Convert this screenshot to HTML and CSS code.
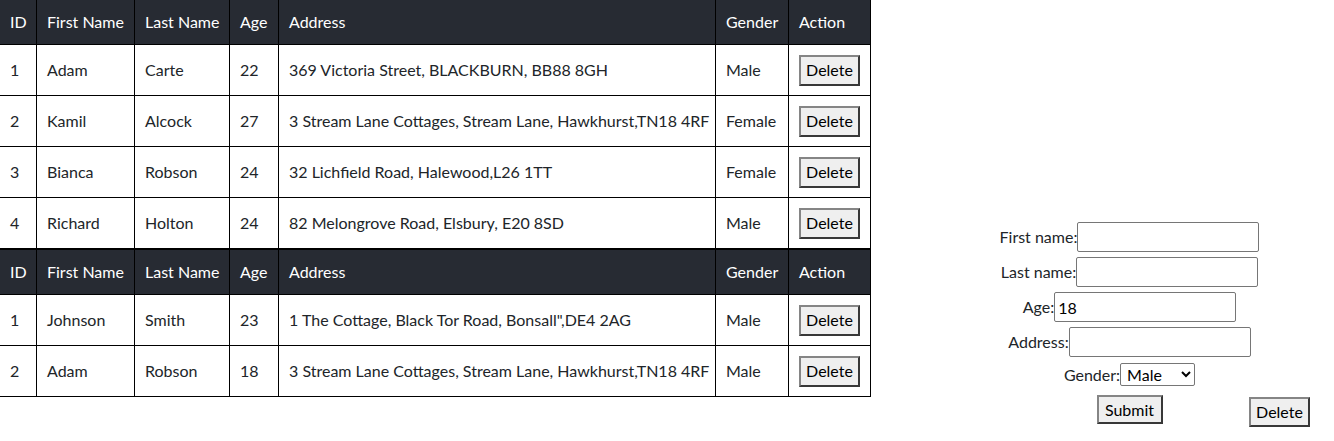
FILE: index.html
```html
<!DOCTYPE html>
<html lang="en">
<head>
<meta charset="utf-8">
<title>People</title>
<link rel="stylesheet" href="styles.css">
</head>
<body>
<div class="page">
  <table class="people">
    <colgroup>
      <col class="c-id"><col class="c-first"><col class="c-last"><col class="c-age"><col class="c-addr"><col class="c-gender"><col class="c-action">
    </colgroup>
    <thead>
      <tr class="head">
        <th>ID</th><th>First Name</th><th>Last Name</th><th>Age</th><th>Address</th><th>Gender</th><th>Action</th>
      </tr>
    </thead>
    <tbody>
      <tr><td>1</td><td>Adam</td><td>Carte</td><td>22</td><td>369 Victoria Street, BLACKBURN, BB88 8GH</td><td>Male</td><td><button type="button" class="btn row-del">Delete</button></td></tr>
      <tr><td>2</td><td>Kamil</td><td>Alcock</td><td>27</td><td>3 Stream Lane Cottages, Stream Lane, Hawkhurst,TN18 4RF</td><td>Female</td><td><button type="button" class="btn row-del">Delete</button></td></tr>
      <tr><td>3</td><td>Bianca</td><td>Robson</td><td>24</td><td>32 Lichfield Road, Halewood,L26 1TT</td><td>Female</td><td><button type="button" class="btn row-del">Delete</button></td></tr>
      <tr><td>4</td><td>Richard</td><td>Holton</td><td>24</td><td>82 Melongrove Road, Elsbury, E20 8SD</td><td>Male</td><td><button type="button" class="btn row-del">Delete</button></td></tr>
    </tbody>
    <tbody class="second">
      <tr class="head">
        <th>ID</th><th>First Name</th><th>Last Name</th><th>Age</th><th>Address</th><th>Gender</th><th>Action</th>
      </tr>
      <tr><td>1</td><td>Johnson</td><td>Smith</td><td>23</td><td>1 The Cottage, Black Tor Road, Bonsall",DE4 2AG</td><td>Male</td><td><button type="button" class="btn row-del">Delete</button></td></tr>
      <tr><td>2</td><td>Adam</td><td>Robson</td><td>18</td><td>3 Stream Lane Cottages, Stream Lane, Hawkhurst,TN18 4RF</td><td>Male</td><td><button type="button" class="btn row-del">Delete</button></td></tr>
    </tbody>
  </table>

  <div class="side">
    <form class="entry">
      <div class="field"><label for="fn">First name:</label><input id="fn" type="text"></div>
      <div class="field"><label for="ln">Last name:</label><input id="ln" type="text"></div>
      <div class="field"><label for="age">Age:</label><input id="age" type="text" value="18"></div>
      <div class="field"><label for="addr">Address:</label><input id="addr" type="text"></div>
      <div class="field gender"><label for="gen">Gender:</label><select id="gen"><option>Male</option><option>Female</option></select></div>
      <div class="actions">
        <span class="spacer"></span>
        <button type="button" class="btn submit">Submit</button>
        <button type="button" class="btn form-del">Delete</button>
      </div>
    </form>
  </div>
</div>
</body>
</html>
```
FILE: styles.css
```css
html, body {
  margin: 0;
  padding: 0;
}

body {
  font-family: Lato, "Segoe UI", "Liberation Sans", sans-serif;
  font-size: 16px;
  line-height: 1.5;
  color: #212529;
  background: #fff;
}

.page {
  display: flex;
  align-items: flex-start;
}

.people {
  border-collapse: separate;
  border-spacing: 0;
  table-layout: fixed;
  width: 871px;
  flex: none;
}

.c-id { width: 37px; }
.c-first { width: 98px; }
.c-last { width: 95px; }
.c-age { width: 49px; }
.c-addr { width: 437px; }
.c-gender { width: 73px; }
.c-action { width: 82px; }

.people th,
.people td {
  box-sizing: border-box;
  border-right: 1px solid #000;
  border-bottom: 1px solid #000;
  padding: 0 10px;
  text-align: left;
  vertical-align: middle;
  white-space: nowrap;
}

.people th {
  background: #272b33;
  color: #fff;
  font-weight: 400;
  height: 45px;
}

.people td {
  height: 51px;
}

.second .head th {
  border-top: 1px solid #000;
  height: 46px;
}

.btn {
  font-family: inherit;
  font-size: 16px;
  line-height: 20px;
  color: #000;
  background: #efefef;
  border: 2px solid;
  border-color: #858585 #383838 #383838 #858585;
  border-radius: 0;
  padding: 0;
  box-sizing: border-box;
  vertical-align: middle;
}

.row-del {
  width: 61px;
  height: 31px;
}

.side {
  flex: 1;
  box-sizing: border-box;
  padding: 222px 24px 0 78px;
}

.entry {
  display: flex;
  flex-direction: column;
  align-items: center;
}

.field {
  display: flex;
  align-items: center;
  height: 30px;
  margin-bottom: 5px;
}

.field label {
  color: #212529;
}

.field input {
  box-sizing: border-box;
  width: 182px;
  height: 30px;
  border: 1px solid #767676;
  border-radius: 2px;
  padding: 1px 3px;
  font-family: inherit;
  font-size: 16px;
  color: #000;
  background: #fff;
}

.field.gender {
  height: 25px;
  margin-bottom: 0;
}

.field select {
  box-sizing: border-box;
  width: 75px;
  height: 23px;
  border: 1px solid #767676;
  border-radius: 2px;
  font-family: inherit;
  font-size: 16px;
  color: #000;
  background: #fff;
  padding: 0 2px;
}

.actions {
  align-self: stretch;
  display: grid;
  grid-template-columns: 1fr auto 1fr;
  align-items: start;
  margin-top: 8px;
}

.submit {
  width: 66px;
  height: 29px;
}

.form-del {
  justify-self: end;
  width: 61px;
  height: 30px;
  margin-top: 2px;
}
```
